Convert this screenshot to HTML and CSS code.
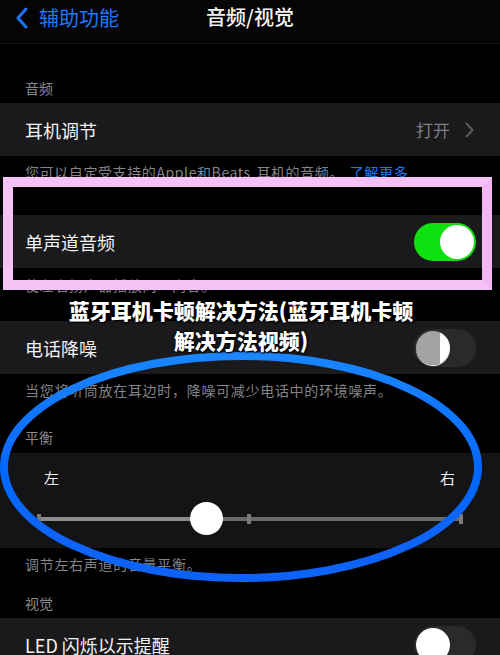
FILE: index.html
```html
<!DOCTYPE html>
<html lang="zh-CN">
<head>
  <meta charset="UTF-8" />
  <meta name="viewport" content="width=device-width, initial-scale=1.0"/>
  <title>音频/视觉</title>
  <link rel="stylesheet" href="styles.css">
</head>
<body>
  <div class="page">
    <nav class="navbar">
      <a class="back" href="#">
        <svg class="back-icon" width="14" height="22" viewBox="0 0 14 22">
          <path d="M11 2 L3 11 L11 20" fill="none" stroke="#1a74f5" stroke-width="3" stroke-linecap="round" stroke-linejoin="round"/>
        </svg>
        <span>辅助功能</span>
      </a>
      <h1 class="title">音频/视觉</h1>
    </nav>

    <div class="section-header first">音频</div>
    <div class="row">
      <span>耳机调节</span>
      <span class="detail">打开
        <svg width="9" height="16" viewBox="0 0 9 16">
          <path d="M1.5 1.5 L7.5 8 L1.5 14.5" fill="none" stroke="#5a5a5e" stroke-width="2" stroke-linecap="round" stroke-linejoin="round"/>
        </svg>
      </span>
    </div>
    <div class="footer tall">您可以自定受支持的Apple和Beats 耳机的音频。 <span class="link">了解更多</span></div>

    <div class="row mono">
      <span>单声道音频</span>
      <span class="toggle on"><span class="knob"></span></span>
    </div>
    <div class="footer mid">使左右扬声器播放同一内容。</div>

    <div class="row">
      <span>电话降噪</span>
      <span class="toggle moving"><span class="knob"></span></span>
    </div>
    <div class="footer">当您将听筒放在耳边时，降噪可减少电话中的环境噪声。</div>

    <div class="section-header">平衡</div>
    <div class="balance">
      <div class="balance-labels">
        <span>左</span>
        <span>右</span>
      </div>
      <div class="track">
        <span class="track-fill"></span>
        <span class="tick tick-left"></span>
        <span class="tick tick-mid"></span>
        <span class="tick tick-right"></span>
        <span class="thumb"></span>
      </div>
    </div>
    <div class="footer">调节左右声道的音量平衡。</div>

    <div class="section-header small">视觉</div>
    <div class="row">
      <span>LED 闪烁以示提醒</span>
      <span class="toggle"><span class="knob"></span></span>
    </div>

    <!-- overlays drawn on the screenshot -->
    <div class="highlight-box"></div>
    <svg class="ring" width="500" height="655" viewBox="0 0 500 655">
      <defs>
        <filter id="glow" x="-10%" y="-10%" width="120%" height="120%">
          <feGaussianBlur stdDeviation="0.5"/>
        </filter>
        <linearGradient id="ringColor" x1="0" y1="0" x2="0" y2="1">
          <stop offset="0" stop-color="#1a86ff"/>
          <stop offset="0.5" stop-color="#0568ff"/>
          <stop offset="1" stop-color="#0a62f8"/>
        </linearGradient>
      </defs>
      <ellipse cx="241" cy="467" rx="237" ry="111" fill="none" stroke="url(#ringColor)" stroke-width="8" filter="url(#glow)"/>
    </svg>
    <div class="caption">蓝牙耳机卡顿解决方法(蓝牙耳机卡顿解决方法视频)</div>
  </div>
</body>
</html>
```

FILE: styles.css
```css
body {
  margin: 0;
  background: #000;
  font-family: "Noto Sans CJK SC", "Noto Sans", sans-serif;
  color: #f0f0f0;
  overflow: hidden;
}
.page {
  position: relative;
  width: 500px;
  height: 655px;
  overflow: hidden;
}
.navbar {
  position: relative;
  height: 43px;
  background: #050505;
  border-bottom: 1px solid #121212;
  display: flex;
  align-items: flex-start;
  justify-content: center;
}
.back {
  position: absolute;
  left: 15px;
  top: 6px;
  display: flex;
  align-items: center;
  gap: 10px;
  color: #1f78ff;
  text-decoration: none;
  font-size: 20px;
  line-height: 24px;
}
.title {
  margin: 5px 0 0;
  font-size: 20px;
  line-height: 24px;
  font-weight: 500;
  color: #f4f4f4;
}
.section-header {
  height: 42px;
  box-sizing: border-box;
  padding: 0 25px 7px;
  display: flex;
  align-items: flex-end;
  font-size: 14px;
  line-height: 18px;
  color: #8a8a8e;
}
.section-header.first {
  height: 59px;
  padding-bottom: 6px;
}
.section-header.small {
  height: 33px;
  padding-bottom: 6px;
}
.row {
  height: 53px;
  box-sizing: border-box;
  padding: 0 24px 0 25px;
  background: #1a1a1c;
  display: flex;
  align-items: center;
  justify-content: space-between;
  font-size: 18px;
  color: #f2f2f2;
}
.row + .row {
  border-top: 1px solid #222;
}
.detail {
  display: flex;
  align-items: center;
  gap: 15px;
  color: #7d7d82;
  font-size: 17px;
  padding-right: 2px;
}
.footer {
  height: 37px;
  box-sizing: border-box;
  padding: 7px 25px 0;
  font-size: 14px;
  line-height: 18px;
  letter-spacing: 0.7px;
  color: #838388;
  white-space: nowrap;
}
.footer.tall {
  height: 59px;
  letter-spacing: 0.6px;
  word-spacing: 2px;
}
.footer.mid {
  height: 53px;
  padding-top: 8px;
}
.link {
  color: #1f78ff;
}
.toggle {
  position: relative;
  width: 62px;
  height: 38px;
  border-radius: 19px;
  background: #2a2a2d;
}
.toggle .knob {
  position: absolute;
  left: 2px;
  top: 2px;
  width: 34px;
  height: 34px;
  border-radius: 50%;
  background: #fff;
}
.toggle.on {
  background: #0fe00f;
}
.toggle.on .knob {
  left: auto;
  right: 2px;
}
.toggle.moving .knob {
  background: linear-gradient(to right, #a3a3a3 72%, #fff 72%);
  box-shadow: 0 1px 0 #fff;
}
.balance {
  height: 95px;
  background: #141416;
  box-sizing: border-box;
  padding-top: 14px;
}
.balance-labels {
  display: flex;
  justify-content: space-between;
  padding: 0 45px 0 44px;
  font-size: 15px;
  line-height: 22px;
  color: #eee;
}
.track {
  position: relative;
  margin: 28px 38px 0;
  height: 4px;
  background: #6b6b6e;
}
.track-fill {
  position: absolute;
  left: 0;
  top: 0;
  width: 168px;
  height: 4px;
  background: #8c8c8e;
}
.tick {
  position: absolute;
  top: -3px;
  width: 4px;
  height: 10px;
  background: #7a7a7c;
}
.tick-left {
  left: -1px;
}
.tick-mid {
  left: 209px;
}
.tick-right {
  right: -1px;
}
.thumb {
  position: absolute;
  left: 152px;
  top: -15px;
  width: 33px;
  height: 33px;
  border-radius: 50%;
  background: #fff;
}
.highlight-box {
  position: absolute;
  left: 3px;
  top: 177px;
  width: 469px;
  height: 93px;
  border: 10px solid #f5c2f5;
  border-right-color: #f3b6f3;
}
.ring {
  position: absolute;
  left: 0;
  top: 0;
  pointer-events: none;
}
.caption {
  position: absolute;
  left: 65px;
  top: 295px;
  width: 352px;
  text-align: center;
  font-size: 21px;
  line-height: 30px;
  font-weight: 900;
  color: #fff;
  text-shadow: 0 0 3px #000, 0 0 2px #000, 1px 1px 1px #000;
}
```
